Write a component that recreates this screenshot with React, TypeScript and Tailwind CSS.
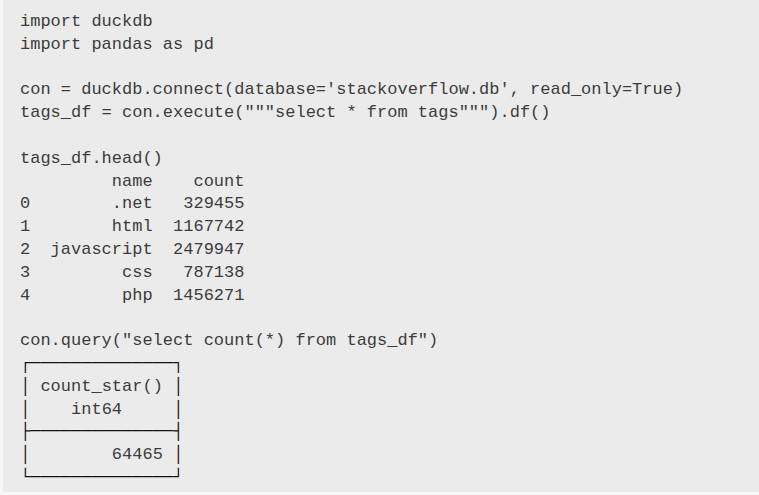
export default function App() {
  const lines = [
    "import duckdb",
    "import pandas as pd",
    "",
    "con = duckdb.connect(database='stackoverflow.db', read_only=True)",
    'tags_df = con.execute("""select * from tags""").df()',
    "",
    "tags_df.head()",
    "         name    count",
    "0        .net   329455",
    "1        html  1167742",
    "2  javascript  2479947",
    "3         css   787138",
    "4         php  1456271",
    "",
    'con.query("select count(*) from tags_df")',
  ];
  const box = [
    "┌──────────────┐",
    "│ count_star() │",
    "│    int64     │",
    "├──────────────┤",
    "│        64465 │",
    "└──────────────┘",
  ];
  return (
    <div className="w-[759px] h-[495px] bg-[#ebebeb] border-l-[3px] border-b-[3px] border-[#f6f6f6] overflow-hidden">
      <pre className="m-0 pl-[17px] pt-[11px] text-[17px] leading-[22.8px] text-[#3c3c3c] font-['Courier_New','Liberation_Mono',monospace] whitespace-pre">
        {lines.join("\n")}
        {"\n"}
        {box.map((l, i) => (
          <span key={i}>
            {Array.from(l).map((c, j) =>
              "┌─┐│├┤└┘".includes(c) ? (
                <span key={j} className="text-[#111111]">{c}</span>
              ) : (
                c
              )
            )}
            {i < box.length - 1 ? "\n" : ""}
          </span>
        ))}
      </pre>
    </div>
  );
}
